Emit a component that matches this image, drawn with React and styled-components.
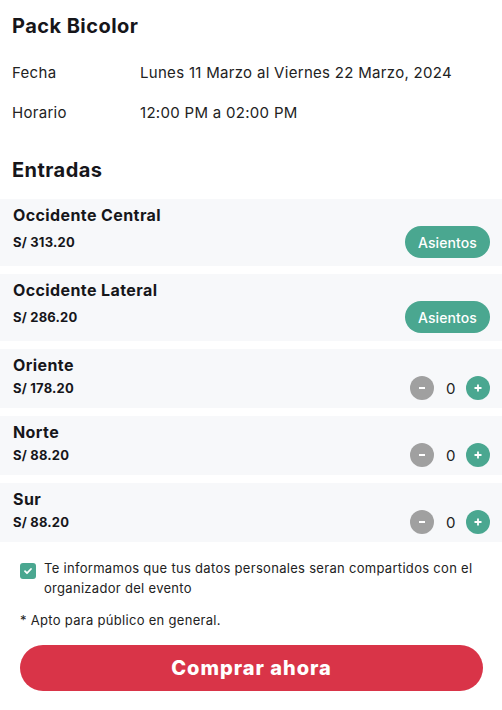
import React, { useState } from 'react'
import styled, { createGlobalStyle } from 'styled-components'

const GlobalStyle = createGlobalStyle`
  * { box-sizing: border-box; }
  body {
    margin: 0;
    background: #fff;
    font-family: Inter, "Open Sans", sans-serif;
    color: #1c1c1e;
  }
`

const Page = styled.div`
  display: flex;
  flex-direction: column;
  padding-top: 12px;
`

const Header = styled.div`
  padding: 0 12px;
`

const Title = styled.h2`
  margin: 0;
  font-size: 20px;
  line-height: 28px;
  font-weight: 700;
  letter-spacing: 0.45px;
  color: #16161a;
`

const InfoList = styled.div`
  display: flex;
  flex-direction: column;
  gap: 16px;
  margin: 21px 0 31px;
`

const InfoRow = styled.div`
  display: grid;
  grid-template-columns: 128px 1fr;
  font-size: 15px;
  line-height: 24px;
  letter-spacing: 0.3px;
  color: #222;
`

const TicketList = styled.div`
  display: flex;
  flex-direction: column;
  gap: 8px;
  margin-top: 15px;
`

const Ticket = styled.div`
  display: flex;
  flex-direction: column;
  padding: 6px 12px 8px 13px;
  background: #f7f8fa;
`

const TicketName = styled.div`
  font-size: 16px;
  line-height: 21px;
  font-weight: 700;
  letter-spacing: 0.4px;
  color: #16161a;
`

const TicketBottom = styled.div`
  display: flex;
  align-items: center;
  justify-content: space-between;
`

const Price = styled.div`
  font-size: 13px;
  font-weight: 700;
  letter-spacing: 0.2px;
  color: #16161a;
`

const SeatsButton = styled.button`
  height: 32px;
  padding: 0 13px;
  border: none;
  border-radius: 16px;
  background: #4aa790;
  color: #fff;
  font-family: inherit;
  font-size: 14px;
  font-weight: 500;
  letter-spacing: 0.1px;
`

const Counter = styled.div`
  display: flex;
  align-items: center;
  gap: 12px;
`

const RoundButton = styled.button`
  width: 24px;
  height: 24px;
  padding: 0;
  border: none;
  border-radius: 50%;
  display: flex;
  align-items: center;
  justify-content: center;
  background: ${p => (p.$plus ? '#4aa790' : '#a0a0a0')};
`

const Count = styled.span`
  width: 8px;
  text-align: center;
  font-size: 15px;
  color: #222;
`

const Footer = styled.div`
  display: flex;
  flex-direction: column;
  padding: 16px 19px 0 20px;
`

const Consent = styled.label`
  display: flex;
  align-items: flex-start;
  gap: 8px;
  font-size: 13px;
  line-height: 20px;
  letter-spacing: 0.3px;
  color: #222;
`

const Check = styled.span`
  flex: none;
  width: 16px;
  height: 16px;
  margin-top: 5px;
  border-radius: 3px;
  background: #4aa790;
  display: flex;
  align-items: center;
  justify-content: center;
`

const Note = styled.p`
  margin: 12px 0 15px;
  font-size: 13px;
  line-height: 20px;
  letter-spacing: 0.3px;
  color: #222;
`

const BuyButton = styled.button`
  height: 46px;
  width: 100%;
  border: none;
  border-radius: 23px;
  background: #d93448;
  color: #fff;
  font-family: inherit;
  font-size: 20px;
  font-weight: 800;
  letter-spacing: 1px;
`

const tickets = [
  { name: 'Occidente Central', price: '313.20', seats: true },
  { name: 'Occidente Lateral', price: '286.20', seats: true },
  { name: 'Oriente', price: '178.20' },
  { name: 'Norte', price: '88.20' },
  { name: 'Sur', price: '88.20' },
]

const Minus = () => (
  <svg width="8" height="8" viewBox="0 0 8 8">
    <path d="M1 4h6" stroke="#fff" strokeWidth="2" />
  </svg>
)

const Plus = () => (
  <svg width="8" height="8" viewBox="0 0 8 8">
    <path d="M0.5 4h7M4 0.5v7" stroke="#fff" strokeWidth="1.8" />
  </svg>
)

export default function App() {
  const [counts, setCounts] = useState({})

  const change = (name, d) =>
    setCounts(c => ({ ...c, [name]: Math.max(0, (c[name] || 0) + d) }))

  return (
    <Page>
      <GlobalStyle />
      <Header>
        <Title>Pack Bicolor</Title>
        <InfoList>
          <InfoRow>
            <span>Fecha</span>
            <span>Lunes 11 Marzo al Viernes 22 Marzo, 2024</span>
          </InfoRow>
          <InfoRow>
            <span>Horario</span>
            <span>12:00 PM a 02:00 PM</span>
          </InfoRow>
        </InfoList>
        <Title>Entradas</Title>
      </Header>
      <TicketList>
        {tickets.map(t => (
          <Ticket key={t.name}>
            <TicketName>{t.name}</TicketName>
            <TicketBottom>
              <Price>S/ {t.price}</Price>
              {t.seats ? (
                <SeatsButton>Asientos</SeatsButton>
              ) : (
                <Counter>
                  <RoundButton onClick={() => change(t.name, -1)}>
                    <Minus />
                  </RoundButton>
                  <Count>{counts[t.name] || 0}</Count>
                  <RoundButton $plus onClick={() => change(t.name, 1)}>
                    <Plus />
                  </RoundButton>
                </Counter>
              )}
            </TicketBottom>
          </Ticket>
        ))}
      </TicketList>
      <Footer>
        <Consent>
          <Check>
            <svg width="10" height="10" viewBox="0 0 10 10">
              <path
                d="M2 5.2l2 2 4-4.2"
                stroke="#fff"
                strokeWidth="1.8"
                fill="none"
                strokeLinecap="round"
                strokeLinejoin="round"
              />
            </svg>
          </Check>
          <span>
            Te informamos que tus datos personales seran compartidos con el
            organizador del evento
          </span>
        </Consent>
        <Note>* Apto para público en general.</Note>
        <BuyButton>Comprar ahora</BuyButton>
      </Footer>
    </Page>
  )
}
